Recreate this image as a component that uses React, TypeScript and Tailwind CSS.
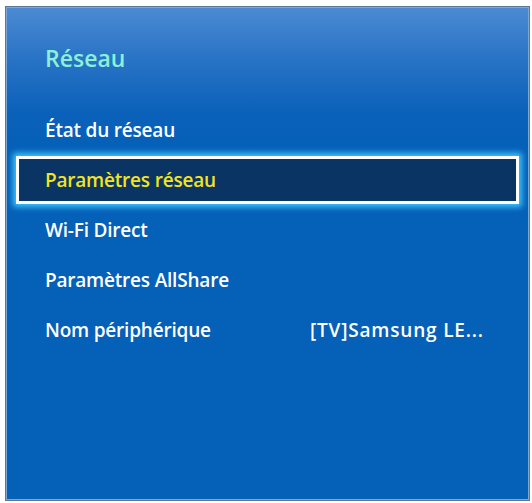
const items = [
  { label: 'État du réseau' },
  { label: 'Paramètres réseau', selected: true },
  { label: 'Wi-Fi Direct' },
  { label: 'Paramètres AllShare' },
  { label: 'Nom périphérique', value: '[TV]Samsung LE...' },
]

export default function App() {
  return (
    <div className="w-[532px] h-[503px] bg-white pl-[5px] pt-[6px] font-['Open_Sans',sans-serif]">
      <div className="w-[525px] h-[495px] border border-[#5f7891] shadow-[inset_0_0_0_1px_#7fa7d2] bg-[linear-gradient(180deg,#4b8bd2_0px,#2a74c6_50px,#0b61ba_105px,#0560b8_140px,#0560b8_100%)] flex flex-col">
        <div className="h-[98px] pl-[39px] pt-[36px]">
          <h1 className="text-[#8cf0d6] text-[23px] font-semibold leading-[30px]">Réseau</h1>
        </div>
        <ul className="px-[10px] flex flex-col">
          {items.map((item) => (
            <li
              key={item.label}
              className={
                item.selected
                  ? 'h-[48px] my-[1px] grid grid-cols-[262px_1fr] items-center pl-[26px] bg-[#0a3463] border-[3px] border-white shadow-[0_0_6px_3px_#3fc6ff] text-[#f2e41e]'
                  : 'h-[50px] grid grid-cols-[265px_1fr] items-center pl-[29px] text-white'
              }
            >
              <span className="text-[19px] font-semibold tracking-[-0.2px] leading-none">{item.label}</span>
              {item.value && (
                <span className="text-[19px] font-semibold tracking-[0.8px] leading-none">{item.value}</span>
              )}
            </li>
          ))}
        </ul>
      </div>
    </div>
  )
}
